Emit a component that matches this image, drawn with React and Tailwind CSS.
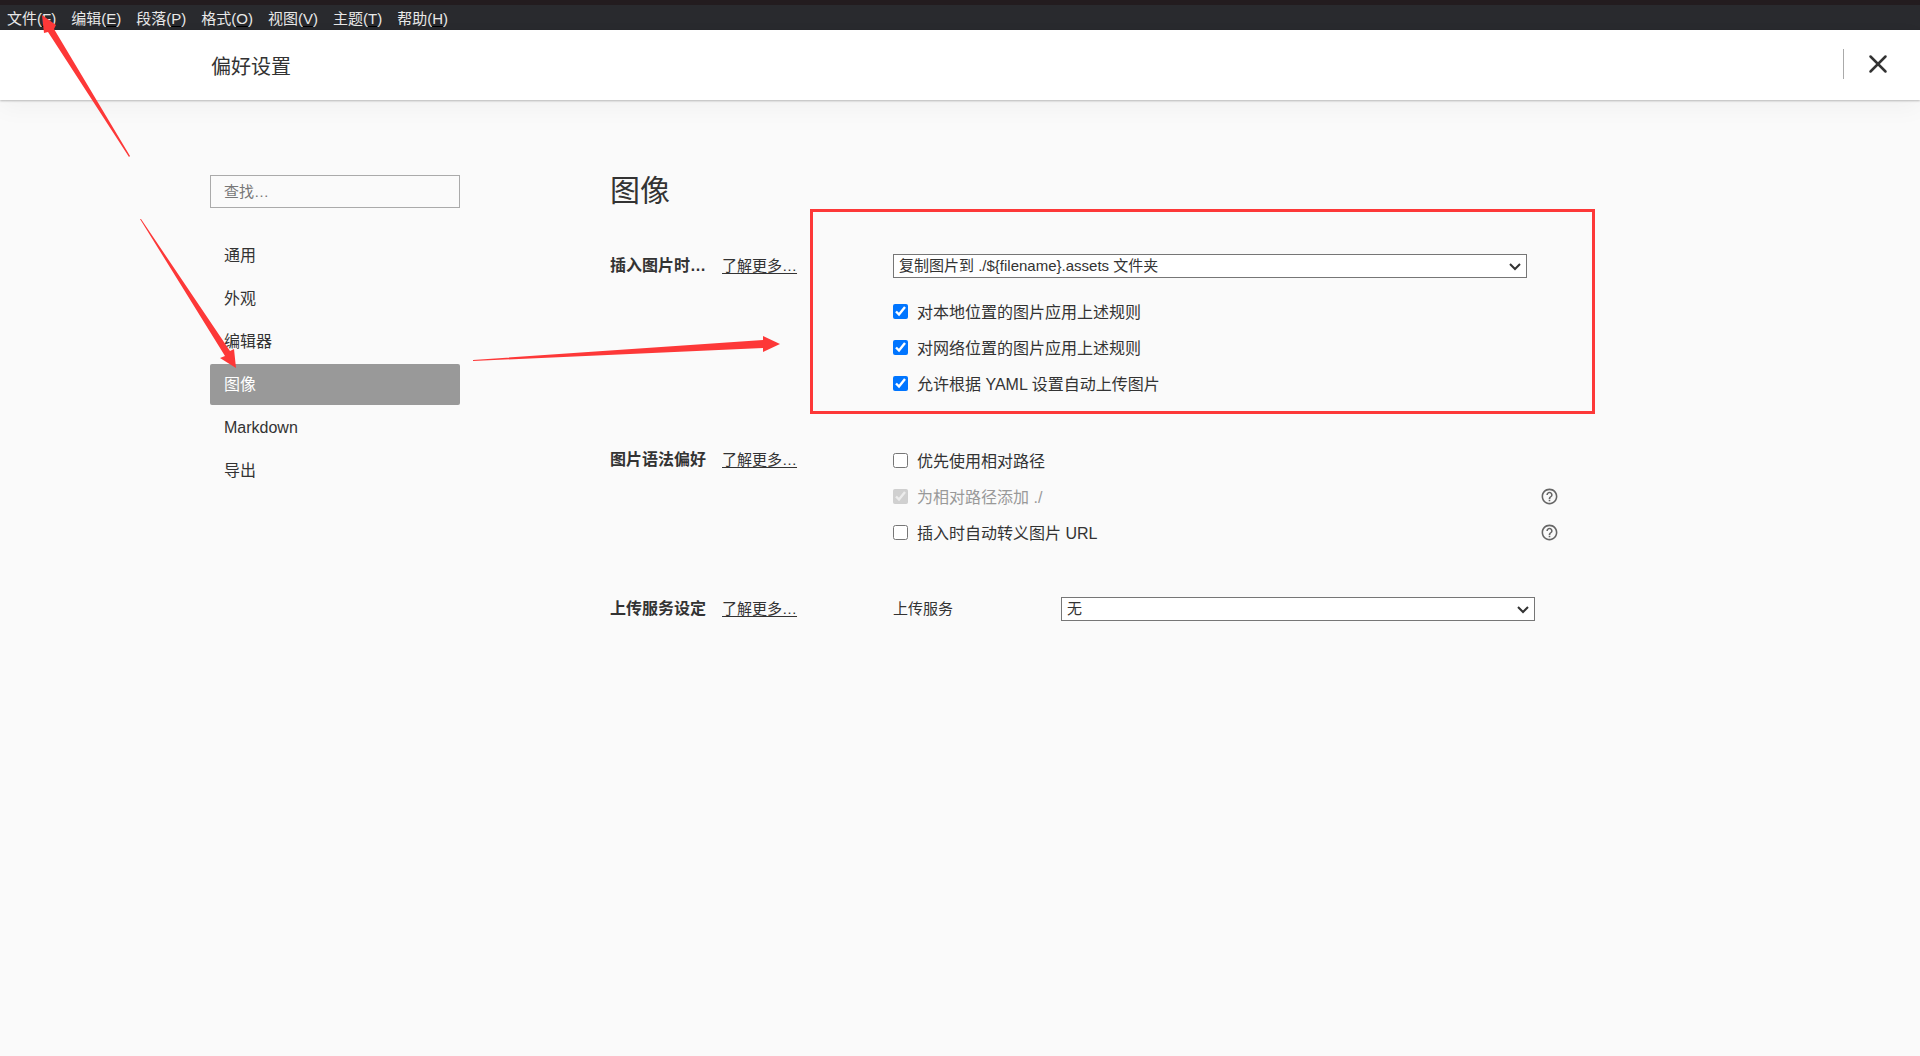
import { useState } from 'react'
import { X } from 'lucide-react'
import { MdHelpOutline } from 'react-icons/md'

const menus = [
  { label: '文件', mnemonic: 'F' },
  { label: '编辑', mnemonic: 'E' },
  { label: '段落', mnemonic: 'P' },
  { label: '格式', mnemonic: 'O' },
  { label: '视图', mnemonic: 'V' },
  { label: '主题', mnemonic: 'T' },
  { label: '帮助', mnemonic: 'H' },
]

const tabs = ['通用', '外观', '编辑器', '图像', 'Markdown', '导出']

function MenuBar() {
  return (
    <nav className="flex h-[30px] items-center gap-[15px] border-t-[5px] border-[#231c1f] bg-[#292a2e] px-[7px] pt-[2px] text-[15px] text-[#e8e8e8]">
      {menus.map((menu) => (
        <button key={menu.mnemonic} type="button" className="leading-5 whitespace-nowrap">
          {menu.label}(<span className="underline decoration-black underline-offset-2">{menu.mnemonic}</span>)
        </button>
      ))}
    </nav>
  )
}

function Header() {
  return (
    <header className="relative h-[70px] bg-white shadow-[0_1px_2px_rgba(0,0,0,0.25),0_8px_24px_rgba(0,0,0,0.04)]">
      <div className="mx-auto flex h-full max-w-[1500px] items-center pt-1 pl-px">
        <h1 className="text-xl">偏好设置</h1>
      </div>
      <div className="absolute top-[19px] right-[27px] flex h-[30px] items-center border-l border-[#aaa] pl-[19px]">
        <button type="button" aria-label="关闭" className="flex">
          <X className="h-[30px] w-[30px]" strokeWidth={2} />
        </button>
      </div>
    </header>
  )
}

function Sidebar({ active, onSelect }) {
  return (
    <aside className="w-[250px] shrink-0 pt-[75px]">
      <input
        type="search"
        aria-label="查找"
        placeholder="查找…"
        className="block h-[33px] w-full border border-[#aaa] bg-transparent px-[13px] text-[15px] placeholder:text-[#777]"
      />
      <ul className="mt-[27px] flex flex-col gap-[2px]">
        {tabs.map((tab) => (
          <li key={tab}>
            <button
              type="button"
              onClick={() => onSelect(tab)}
              className={`block h-[41px] w-full rounded-[2px] px-[14px] text-left text-base ${
                active === tab ? 'bg-[#999] text-white' : ''
              }`}
            >
              {tab}
            </button>
          </li>
        ))}
      </ul>
    </aside>
  )
}

function Section({ title, children }) {
  return (
    <section className="flex">
      <div className="flex w-[283px] shrink-0 gap-4">
        <h3 className="text-base/9 font-bold">{title}</h3>
        <a href="#more" className="text-[15px]/9 underline underline-offset-2">了解更多…</a>
      </div>
      <div className="min-w-0 flex-1">{children}</div>
    </section>
  )
}

function Select({ children, ...props }) {
  return (
    <div className="relative flex min-w-0 flex-1">
      <select
        {...props}
        className="h-6 w-full appearance-none border border-[#767676] bg-white pr-6 pl-[5px] text-[15px] leading-5"
      >
        {children}
      </select>
      <svg
        className="pointer-events-none absolute top-[9px] right-[6px] h-2 w-3"
        viewBox="0 0 12 8"
        fill="none"
        stroke="#333"
        strokeWidth="2"
      >
        <path d="M1 1l5 5 5-5" />
      </svg>
    </div>
  )
}

function Option({ label, checked = false, disabled, help }) {
  const [value, setValue] = useState(checked)

  return (
    <div className="flex h-9 items-center justify-between">
      <label className={`flex items-center gap-[9px] text-base ${disabled ? 'text-[#999]' : ''}`}>
        <input
          type="checkbox"
          checked={value}
          disabled={disabled}
          onChange={(e) => setValue(e.target.checked)}
          className="h-[15px] w-[15px]"
        />
        <span className="pt-[3px]">{label}</span>
      </label>
      {help && (
        <button type="button" aria-label="帮助" className="text-[#666]">
          <MdHelpOutline className="h-[19px] w-[19px]" />
        </button>
      )}
    </div>
  )
}

// Red frame and arrows drawn on top of the window
function Annotations() {
  return (
    <svg className="pointer-events-none absolute top-0 left-0" width="1920" height="1056" fill="#fd3838">
      <polygon points="42,15 56,25 54,29 130,156 129,157 48,32 44,33" />
      <polygon points="140,219 141,219 230,351 234,349 236,368 220,358 225,356" />
      <polygon points="473,360 763,340 763,336 780,344 763,352 763,348 473,361" />
      <rect x="811.5" y="210.5" width="782" height="202" fill="none" stroke="#fd3838" strokeWidth="3" />
    </svg>
  )
}

export default function App() {
  const [active, setActive] = useState('图像')

  return (
    <div className="relative min-h-screen overflow-x-hidden bg-[#fafafa] font-['Liberation_Sans','Noto_Sans_CJK_SC',sans-serif] text-[#333]">
      <MenuBar />
      <Header />
      <div className="mx-auto flex max-w-[1500px] gap-[150px] pr-[151px]">
        <Sidebar active={active} onSelect={setActive} />
        <main className="min-w-0 flex-1 pt-[71px]">
          <h2 className="text-[30px] leading-10">图像</h2>
          <div className="mt-[37px] flex flex-col gap-[41px]">
            <Section title="插入图片时…">
              <div className="flex h-9 items-center pr-8">
                <Select aria-label="插入图片时">
                  <option>{'复制图片到 ./${filename}.assets 文件夹'}</option>
                </Select>
              </div>
              <div className="mt-[9px]">
                <Option label="对本地位置的图片应用上述规则" checked />
                <Option label="对网络位置的图片应用上述规则" checked />
                <Option label="允许根据 YAML 设置自动上传图片" checked />
              </div>
            </Section>
            <Section title="图片语法偏好">
              <Option label="优先使用相对路径" />
              <Option label="为相对路径添加 ./" checked disabled help />
              <Option label="插入时自动转义图片 URL" help />
            </Section>
            <Section title="上传服务设定">
              <div className="flex h-9 items-center pr-6">
                <label htmlFor="uploader" className="w-[168px] shrink-0 text-[15px]">上传服务</label>
                <Select id="uploader">
                  <option>无</option>
                </Select>
              </div>
            </Section>
          </div>
        </main>
      </div>
      <Annotations />
    </div>
  )
}
